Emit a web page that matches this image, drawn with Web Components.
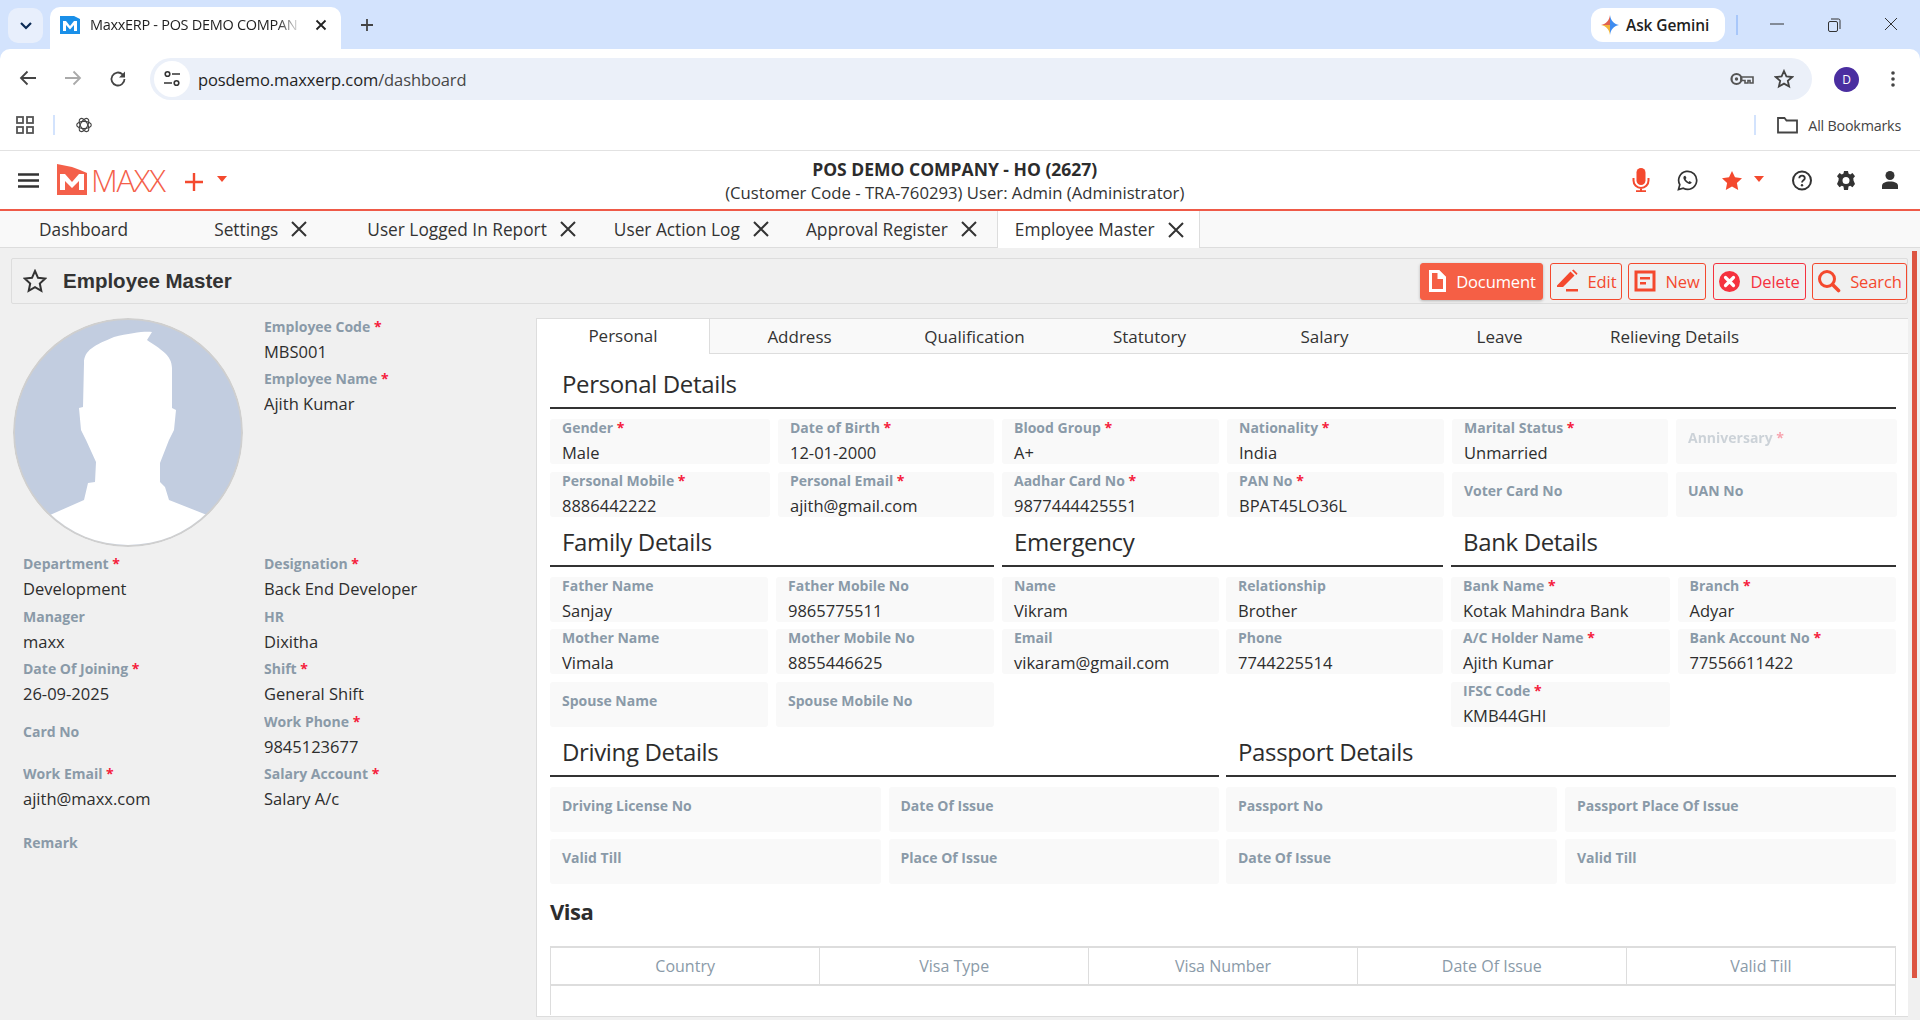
<!DOCTYPE html>
<html>
<head>
<meta charset="utf-8">
<title>MaxxERP - POS DEMO COMPANY</title>
<style>
  html, body { margin: 0; height: 100%; overflow: hidden; background: #f0f0f0; }
  body { font-family: "Open Sans", "Liberation Sans", sans-serif; color: #333; display: flex; flex-direction: column; height: 1020px; }
</style>
</head>
<body>
<browser-bar></browser-bar>
<app-header></app-header>
<page-tabs></page-tabs>
<page-title></page-title>
<main-area>
  <employee-sidebar></employee-sidebar>
  <detail-panel></detail-panel>
</main-area>

<script>
const RED = "#f4492e";

const ICONS = {
  doc: `<svg width="20" height="24" viewBox="0 0 20 24"><path fill="#fff" d="M2 1h10l7 7v15H2z"/><path fill="#f55f45" d="M5 4h5.500v6H16v10H5z"/><path fill="#fff" d="M12 1v7h7z"/></svg>`,
  edit: `<svg width="24" height="24" viewBox="0 0 24 24"><path fill="${RED}" d="M15.500 2.500l4 4L8 18H2v-1.500zM11 20h12v2.500H11z"/><path fill="${RED}" d="M17 1.500l1.500-1 4 4-1 1.500z"/></svg>`,
  form: `<svg width="22" height="22" viewBox="0 0 22 22"><rect x="2" y="2" width="18" height="18" fill="none" stroke="${RED}" stroke-width="3"/><path fill="${RED}" d="M6 7h10v2.500H6zM6 12h6v2.500H6z"/></svg>`,
  del: `<svg width="23" height="23" viewBox="0 0 23 23"><circle cx="11.500" cy="11.500" r="10.500" fill="#f5323f"/><path stroke="#fff" stroke-width="3.200" stroke-linecap="round" d="M7.500 7.500l8 8M15.500 7.500l-8 8"/></svg>`,
  search: `<svg width="24" height="24" viewBox="0 0 24 24"><circle cx="10" cy="10" r="7.500" fill="none" stroke="${RED}" stroke-width="3"/><path stroke="${RED}" stroke-width="3.600" stroke-linecap="round" d="M15.500 15.500l6 6"/></svg>`,
};

class BrowserBar extends HTMLElement {
  constructor() {
    super();
    this.attachShadow({mode: "open"}).innerHTML = `
      <style>
        :host { display: block; background: #d3e3fd; font-family: "Open Sans", sans-serif; color: #1f1f1f; flex: none; }
        svg { display: block; flex: none; }
        .strip { height: 49px; display: flex; align-items: flex-start; position: relative; }
        .tablist { width: 35px; height: 35px; margin: 8px 7px 0 8px; border-radius: 10px; background: #e8effc; display: grid; place-items: center; flex: none; }
        .tab { width: 291px; height: 42px; margin-top: 7px; background: #fff; border-radius: 10px 10px 0 0; display: flex; align-items: center; padding: 0 10px 7px; box-sizing: border-box; flex: none; }
        .tab .ttl { margin-left: 10px; width: 212px; overflow: hidden; white-space: nowrap; font-size: 14.500px; letter-spacing: -.3px; -webkit-mask-image: linear-gradient(to right, #000 88%, transparent); }
        .tab .x { margin-left: 13px; }
        .newtab { margin: 18px 0 0 19px; }
        .right { margin-left: auto; display: flex; align-items: center; height: 49px; }
        .gemini { width: 134px; height: 34px; border-radius: 12px; background: #fff; display: flex; align-items: center; gap: 7px; padding-left: 10px; box-sizing: border-box; font-size: 15.500px; font-weight: 600; letter-spacing: -.1px; }
        .vsep { width: 2px; height: 20px; background: #a8c7fa; margin-left: 11px; }
        .win { display: flex; margin: 0 22px 0 32px; gap: 43px; }
        .tools { height: 51px; box-sizing: border-box; padding: 9px 0 0 19px; background: #fff; border-radius: 10px 10px 0 0; display: flex; align-items: center; }
        .nav { display: flex; gap: 27px; margin-right: 23px; }
        .omni { width: 1662px; height: 42px; box-sizing: border-box; background: #ebf0f9; border-radius: 21px; display: flex; align-items: center; padding-left: 4px; font-size: 16.500px; letter-spacing: -.1px; }
        .site { width: 36px; height: 36px; border-radius: 50%; background: #fff; display: grid; place-items: center; margin-right: 8px; }
        .omni .gray { color: #474747; }
        .omni .end { margin-left: auto; display: flex; align-items: center; gap: 20px; padding-right: 18px; }
        .prof { width: 25px; height: 25px; border-radius: 50%; background: #4a2ea0; color: #fff; font-size: 12px; display: grid; place-items: center; margin-left: 22px; }
        .dots { margin-left: 32px; }
        .marks { height: 50px; background: #fff; border-bottom: 1px solid #e2e2e2; display: flex; align-items: center; padding-left: 16px; font-size: 14.300px; color: #444; }
        .marks .sep { width: 2px; height: 20px; background: #d3e3fd; margin: 0 21px 0 19px; }
        .marks .all { margin-left: auto; display: flex; align-items: center; gap: 10px; padding-right: 19px; letter-spacing: -.2px; }
        .marks .sep2 { width: 2px; height: 20px; background: #d3e3fd; margin-right: 11px; }
      </style>
      <div class="strip">
        <div class="tablist"><svg width="14" height="10" viewBox="0 0 14 10"><path d="M2 2l5 5 5-5" fill="none" stroke="#0b2a55" stroke-width="2.200"/></svg></div>
        <div class="tab">
          <svg width="20" height="20" viewBox="0 0 20 20"><path fill="#1a8fe8" d="M0 1l14 0 6 3v15H0z"/><path fill="#fff" d="M3 16V6h3l4 5 4-5h3v10h-3V10l-4 4.500L6 10v6z"/></svg>
          <span class="ttl">MaxxERP - POS DEMO COMPAN</span>
          <svg class="x" width="12" height="12" viewBox="0 0 12 12"><path d="M1.500 1.500l9 9M10.500 1.500l-9 9" stroke="#222" stroke-width="1.800"/></svg>
        </div>
        <svg class="newtab" width="14" height="14" viewBox="0 0 14 14"><path d="M7 1v12M1 7h12" stroke="#444" stroke-width="1.800"/></svg>
        <div class="right">
          <div class="gemini">
            <svg width="18" height="20" viewBox="0 0 18 20"><path fill="#3f8cf0" d="M9 0c.8 5.500 3.500 8.800 9 10-5.500 1.200-8.200 4.500-9 10z"/><path fill="#e0604f" d="M9 0C8.200 5.500 5.500 8.800 0 10h9z"/><path fill="#f3b63c" d="M0 10c5.500 1.200 8.200 4.500 9 10v-10z"/></svg>
            <span>Ask Gemini</span>
          </div>
          <div class="vsep"></div>
          <div class="win">
            <svg width="14" height="14" viewBox="0 0 14 14"><path d="M0 7h14" stroke="#333" stroke-width="1"/></svg>
            <svg width="14" height="16" viewBox="0 0 14 16"><rect x="1.500" y="4.500" width="9" height="10" rx="1.500" fill="none" stroke="#333"/><path d="M4 2h7.500a1.500 1.500 0 0 1 1.500 1.500V12" fill="none" stroke="#333"/></svg>
            <svg width="14" height="14" viewBox="0 0 14 14"><path d="M1 1l12 12M13 1L1 13" stroke="#333" stroke-width="1"/></svg>
          </div>
        </div>
      </div>
      <div class="tools">
        <div class="nav">
          <svg width="18" height="16" viewBox="0 0 18 16"><path d="M17 8H2M8.500 1.500L2 8l6.500 6.500" fill="none" stroke="#444" stroke-width="1.800"/></svg>
          <svg width="18" height="16" viewBox="0 0 18 16"><path d="M1 8h15M9.500 1.500L16 8l-6.500 6.500" fill="none" stroke="#aaa" stroke-width="1.800"/></svg>
          <svg width="18" height="18" viewBox="0 0 18 18"><path d="M15.500 9a6.500 6.500 0 1 1-2-4.700L15.500 6.500" fill="none" stroke="#444" stroke-width="1.800"/><path d="M16 1.500v6h-6z" fill="#444"/></svg>
        </div>
        <div class="omni">
          <div class="site"><svg width="18" height="18" viewBox="0 0 18 18"><circle cx="4.500" cy="4" r="2.300" fill="none" stroke="#333" stroke-width="1.600"/><path d="M9 4h8M1 13h8" stroke="#333" stroke-width="1.600"/><circle cx="13.500" cy="13" r="2.300" fill="none" stroke="#333" stroke-width="1.600"/></svg></div>
          <span>posdemo.maxxerp.com</span><span class="gray">/dashboard</span>
          <div class="end">
            <svg width="24" height="14" viewBox="0 0 24 14"><circle cx="6.500" cy="7" r="5" fill="none" stroke="#555" stroke-width="2.200"/><circle cx="6.500" cy="7" r="1.700" fill="#555"/><path d="M11 5h12v6h-3V8.500h-2V11h-3V8.500h-4z" fill="none" stroke="#555" stroke-width="1.600"/></svg>
            <svg width="20" height="20" viewBox="0 0 20 20"><path d="M10 2l2.400 5.400 5.800.6-4.400 3.800 1.300 5.700L10 14.600l-5.100 2.900 1.300-5.700L1.800 8l5.800-.6z" fill="none" stroke="#444" stroke-width="1.800"/></svg>
          </div>
        </div>
        <div class="prof">D</div>
        <svg class="dots" width="4" height="16" viewBox="0 0 4 16"><circle cx="2" cy="2" r="1.800" fill="#444"/><circle cx="2" cy="8" r="1.800" fill="#444"/><circle cx="2" cy="14" r="1.800" fill="#444"/></svg>
      </div>
      <div class="marks">
        <svg width="18" height="18" viewBox="0 0 18 18"><g fill="none" stroke="#555" stroke-width="1.800"><rect x="1" y="1" width="6" height="6"/><rect x="11" y="1" width="6" height="6"/><rect x="1" y="11" width="6" height="6"/><rect x="11" y="11" width="6" height="6"/></g></svg>
        <div class="sep"></div>
        <svg width="16" height="16" viewBox="0 0 16 16"><g fill="none" stroke="#444" stroke-width="1.100"><ellipse cx="8" cy="8" rx="7.300" ry="3.600"/><ellipse cx="8" cy="8" rx="7.300" ry="3.600" transform="rotate(60 8 8)"/><ellipse cx="8" cy="8" rx="7.300" ry="3.600" transform="rotate(120 8 8)"/></g></svg>
        <div class="all"><div class="sep2"></div>
          <svg width="21" height="18" viewBox="0 0 21 18"><path d="M1 2h6.500l2 2.500H20V16.500H1z" fill="none" stroke="#444" stroke-width="1.800"/></svg>
          <span>All Bookmarks</span>
        </div>
      </div>`;
  }
}

class AppHeader extends HTMLElement {
  constructor() {
    super();
    this.attachShadow({mode: "open"}).innerHTML = `
      <style>
        :host { display: flex; height: 58px; background: #fff; border-bottom: 2px solid #ef5a48; align-items: center; position: relative; flex: none; padding-left: 18px; }
        svg { display: block; flex: none; }
        .logo { margin-left: 18px; display: flex; align-items: flex-end; margin-top: -2px; }
        .maxx { color: #f4604a; font-size: 31px; font-weight: 300; line-height: 30px; margin-left: 4px; letter-spacing: -1.300px; }
        .plus { margin-left: 20px; margin-top: 4px; }
        .caret { width: 0; height: 0; border: 5px solid transparent; border-top: 6px solid ${RED}; border-bottom: 0; }
        .center { flex: 1; text-align: center; margin-left: 38px; padding-top: 2px; color: #333; }
        .center b { display: block; font-size: 17.500px; line-height: 24px; color: #2c2c2c; font-weight: 700; }
        .center span { display: block; font-size: 16.700px; line-height: 24px; }
        .icons { display: flex; align-items: center; width: 275px; padding-right: 22px; box-sizing: border-box; justify-content: flex-end; }
      </style>
      <svg width="21" height="15" viewBox="0 0 21 15"><path d="M0 1.500h21M0 7.500h21M0 13.500h21" stroke="#333" stroke-width="2.400"/></svg>
      <div class="logo">
        <svg width="30" height="31" viewBox="0 0 30 31"><path fill="#f4604a" d="M0 0l15 3 8 3 7 3v22H0z"/><path fill="#fff" d="M3 26V10h5l7 8 7-8h5v16h-5V17l-7 7-7-7v9z"/></svg>
        <span class="maxx">MAXX</span>
      </div>
      <svg class="plus" width="18" height="18" viewBox="0 0 18 18"><path d="M9 0v18M0 9h18" stroke="${RED}" stroke-width="2.400"/></svg>
      <div class="caret" style="margin-left:14px;margin-top:-2px"></div>
      <div class="center">
        <b>POS DEMO COMPANY - HO (2627)</b>
        <span>(Customer Code - TRA-760293) User: Admin (Administrator)</span>
      </div>
      <div class="icons">
        <svg width="18" height="24" viewBox="0 0 18 24" style="margin-right:27px"><rect x="4.500" y="0" width="9" height="17" rx="4.500" fill="${RED}"/><path d="M1.500 10v2.500a7.500 7.500 0 0 0 15 0V10M9 20v3M4 23.200h10" fill="none" stroke="${RED}" stroke-width="2"/></svg>
        <svg width="21" height="21" viewBox="0 0 21 21" style="margin-right:24px"><path d="M1.500 19.500l1.300-4.800A9 9 0 1 1 6.300 18.200z" fill="none" stroke="#333" stroke-width="1.700"/><path d="M7.300 6c-1 .6-1.200 2-.4 3.500 1 2 2.600 3.500 4.700 4.300 1.500.5 2.700 0 3.200-1.200l-2.200-1.500-1 .9c-1.200-.5-2.400-1.700-3-3l.9-1L8.300 5.800z" fill="#333"/></svg>
        <svg width="20" height="19" viewBox="0 0 20 19" style="margin-right:12px"><path d="M10 0l3 6.300 7 .9-5.100 4.800 1.300 7L10 15.600 3.800 19l1.300-7L0 7.200l7-.9z" fill="${RED}"/></svg>
        <div class="caret" style="margin-top:-2px;margin-right:28px"></div>
        <svg width="20" height="21" viewBox="0 0 20 21" style="margin-right:25px"><circle cx="10" cy="10.500" r="9" fill="none" stroke="#333" stroke-width="2"/><path d="M7.300 8.300c0-3.500 5.500-3.500 5.500 0 0 2-2.800 2-2.800 4.200" fill="none" stroke="#333" stroke-width="1.800"/><circle cx="10" cy="15.300" r="1.200" fill="#333"/></svg>
        <svg width="18" height="19" viewBox="0 0 18 19" style="margin-right:27px"><path fill="#333" fill-rule="evenodd" d="M7 0h4l.5 2.600 1.700.8L15.500 2 18 5.200l-1.700 2 .2 2.300L18 13l-2.500 3.300-2.300-1.500-1.700.8L11 19H7l-.5-3.400-1.700-.8-2.300 1.500L0 13l1.500-3.500.2-2.300L0 5.200 2.500 2l2.300 1.400 1.700-.8zM9 6a3.500 3.500 0 1 0 0 7 3.500 3.500 0 0 0 0-7z"/></svg>
        <svg width="16" height="18" viewBox="0 0 16 18"><circle cx="8" cy="4.500" r="4.500" fill="#333"/><path d="M0 18v-3c0-3 3-4.500 8-4.500s8 1.500 8 4.500v3z" fill="#333"/></svg>
      </div>`;
  }
}

class PageTabs extends HTMLElement {
  constructor() {
    super();
    const tabs = [
      ["Dashboard", false],
      ["Settings", true],
      ["User Logged In Report", true],
      ["User Action Log", true],
      ["Approval Register", true],
    ];
    const x = `<svg width="16" height="16" viewBox="0 0 16 16"><path d="M1 1l14 14M15 1L1 15" stroke="#333" stroke-width="2"/></svg>`;
    const gaps = [86, 60, 38, 37, 0];
    const items = tabs.map((t, i) => `<div class="t" style="margin-right:${gaps[i]}px"><span>${t[0]}</span>${t[1] ? x : ""}</div>`).join("");
    this.attachShadow({mode: "open"}).innerHTML = `
      <style>
        :host { display: flex; height: 36px; background: #f9f9f9; border-bottom: 1px solid #ddd; padding-left: 39px; align-items: stretch; flex: none; font-size: 17.300px; color: #333; }
        .t { display: flex; align-items: center; gap: 13px; white-space: nowrap; }
        svg { display: block; flex: none; }
        .active { background: #fff; border: solid #ddd; border-width: 0 1px; margin-left: 20px; padding: 0 17px; width: 203px; box-sizing: border-box; margin-bottom: -1px; }
      </style>
      ${items}
      <div class="t active"><span>Employee Master</span>${x}</div>`;
  }
}

class ActionBtn extends HTMLElement {
  constructor() {
    super();
    this.attachShadow({mode: "open"}).innerHTML = `
      <style>
        :host { display: inline-flex; align-items: center; height: 37px; box-sizing: border-box; border: 1px solid ${RED}; border-radius: 3px; color: ${RED}; font-size: 16.500px; gap: 9px; justify-content: center; letter-spacing: -.1px; }
        :host([solid]) { background: #f55f45; border-color: #f55f45; color: #fff; box-shadow: 0 1px 3px rgba(0,0,0,.25); }
        :host([danger]) { border-color: #f5323f; color: #f5323f; }
        svg { display: block; flex: none; }
      </style>
      ${ICONS[this.getAttribute("icon")]}<slot></slot>`;
  }
}

class PageTitle extends HTMLElement {
  constructor() {
    super();
    this.attachShadow({mode: "open"}).innerHTML = `
      <style>
        :host { display: flex; align-items: center; height: 46px; box-sizing: border-box; margin: 10px 12px 0 11px; border: 1px solid #ddd; border-radius: 2px; padding: 0 0 0 11px; flex: none; }
        svg { display: block; flex: none; }
        h1 { margin: 1px 0 0 16px; font: bold 20.500px/1 "Liberation Sans", Arial, sans-serif; color: #333; }
        .btns { margin-left: auto; display: flex; gap: 6.500px; }
      </style>
      <svg width="24" height="24" viewBox="0 0 24 24"><path d="M12 2l3 6.800 7.200.8-5.400 4.900 1.500 7.300L12 18.200l-6.300 3.600 1.500-7.300L1.800 9.600 9 8.800z" fill="none" stroke="#333" stroke-width="2"/></svg>
      <h1>Employee Master</h1>
      <div class="btns">
        <action-btn icon="doc" solid style="width:123px">Document</action-btn>
        <action-btn icon="edit" style="width:72px">Edit</action-btn>
        <action-btn icon="form" style="width:78px">New</action-btn>
        <action-btn icon="del" danger style="width:93px">Delete</action-btn>
        <action-btn icon="search" style="width:95px">Search</action-btn>
      </div>`;
  }
}

class MainArea extends HTMLElement {
  constructor() {
    super();
    this.attachShadow({mode: "open"}).innerHTML = `
      <style>
        :host { display: flex; flex: 1; min-height: 0; position: relative; }
        .thumb { position: absolute; right: 3px; top: -53px; width: 5px; height: 727px; background: #dd5542; }
      </style>
      <slot></slot><div class="thumb"></div>`;
  }
}

class FieldBox extends HTMLElement {
  constructor() {
    super();
    const value = this.getAttribute("value");
    const req = this.hasAttribute("req") ? ` <i>*</i>` : "";
    this.attachShadow({mode: "open"}).innerHTML = `
      <style>
        :host { display: block; height: 45px; box-sizing: border-box; background: #f9f9f9; border-radius: 3px; padding-left: 12px; overflow: hidden; white-space: nowrap; }
        :host([plain]) { background: none; padding-left: 0; }
        :host([dim]) .lbl { opacity: .4; }
        .lbl { font-size: 14px; font-weight: 700; line-height: 18px; color: #8a9aa8; }
        .lbl.low { margin-top: 10px; }
        i { color: #f5203c; font-style: normal; font-weight: 700; }
        .val { font-size: 16.500px; line-height: 22px; margin-top: 5px; color: #2d2d2d; }
      </style>
      <div class="lbl ${value ? "" : "low"}">${this.getAttribute("label")}${req}</div>
      ${value ? `<div class="val">${value}</div>` : ""}`;
  }
}

class SectionHead extends HTMLElement {
  constructor() {
    super();
    this.attachShadow({mode: "open"}).innerHTML = `
      <style>
        :host { display: flex; align-items: flex-end; box-sizing: border-box; height: var(--h, 50px); border-bottom: 2px solid #333; margin-bottom: 10px; padding: 0 0 8px 12px; font-size: 24px; line-height: 30px; color: #2d2d2d; letter-spacing: -.35px; }
      </style>
      <slot></slot>`;
  }
}

class FormGrid extends HTMLElement {
  constructor() {
    super();
    this.attachShadow({mode: "open"}).innerHTML = `
      <style>
        :host { display: grid; grid-template-columns: var(--cols, 1fr 1fr); column-gap: var(--cgap, 8px); row-gap: 7.500px; }
      </style>
      <slot></slot>`;
  }
}

class EmployeeSidebar extends HTMLElement {
  constructor() {
    super();
    this.attachShadow({mode: "open"}).innerHTML = `
      <style>
        :host { display: block; width: 536px; flex: none; box-sizing: border-box; padding: 14px 0 0 0; }
        .top { display: flex; height: 237px; padding-left: 13px; }
        .photo { display: block; flex: none; border-radius: 50%; }
        .tf { margin-left: 21px; display: flex; flex-direction: column; gap: 7px; width: 240px; }
        .rows { display: grid; grid-template-columns: 241px 240px; padding-left: 23px; row-gap: 7.500px; }
        .remark { margin-top: 6px; }
      </style>
      <div class="top">
        <svg class="photo" width="230" height="229" viewBox="13 318 230 229">
          <ellipse cx="128" cy="432.500" rx="114" ry="113.500" fill="#c2cde0" stroke="#cfcfcf" stroke-width="2"/>
          <clipPath id="c"><ellipse cx="128" cy="432.500" rx="113" ry="112.500"/></clipPath>
          <path clip-path="url(#c)" fill="#fff" d="M152 332 147 340C160 349 172 355 172 368L172 408 176 410 174 430 169 440 160 463 160 482 165 487 169 500 207 515 207 560 50 560 50 515 84 500 88 483 95 482 96 462 86 440 81 430 79 408 83 407 84 363C84 350 95 345 114 337 130 333 145 331 152 332Z"/>
        </svg>
        <div class="tf">
          <field-box plain label="Employee Code" req value="MBS001"></field-box>
          <field-box plain label="Employee Name" req value="Ajith Kumar"></field-box>
        </div>
      </div>
      <div class="rows">
        <field-box plain label="Department" req value="Development"></field-box>
        <field-box plain label="Designation" req value="Back End Developer"></field-box>
        <field-box plain label="Manager" value="maxx"></field-box>
        <field-box plain label="HR" value="Dixitha"></field-box>
        <field-box plain label="Date Of Joining" req value="26-09-2025"></field-box>
        <field-box plain label="Shift" req value="General Shift"></field-box>
        <field-box plain label="Card No"></field-box>
        <field-box plain label="Work Phone" req value="9845123677"></field-box>
        <field-box plain label="Work Email" req value="ajith@maxx.com"></field-box>
        <field-box plain label="Salary Account" req value="Salary A/c"></field-box>
        <field-box plain class="remark" label="Remark"></field-box>
      </div>`;
  }
}

class DetailTabs extends HTMLElement {
  constructor() {
    super();
    const names = ["Personal", "Address", "Qualification", "Statutory", "Salary", "Leave", "Relieving Details"];
    this.attachShadow({mode: "open"}).innerHTML = `
      <style>
        :host { display: flex; height: 36px; box-sizing: border-box; background: #f9f9f9; border-bottom: 1px solid #ddd; border-top: 1px solid #ddd; flex: none; font-size: 17px; color: #333; }
        div { width: 175px; display: grid; place-items: center; }
        .on { background: #fff; border-right: 1px solid #ddd; box-sizing: border-box; width: 173px; margin-bottom: -1px; padding-bottom: 2px; margin-right: 2px; }
      </style>
      ${names.map((n, i) => `<div class="${i ? "" : "on"}">${n}</div>`).join("")}`;
  }
}

class VisaTable extends HTMLElement {
  constructor() {
    super();
    const heads = ["Country", "Visa Type", "Visa Number", "Date Of Issue", "Valid Till"];
    this.attachShadow({mode: "open"}).innerHTML = `
      <style>
        :host { display: block; margin-top: 21px; height: 69px; box-sizing: border-box; border: solid #ddd; border-width: 0 1px; }
        table { width: 100%; border-collapse: collapse; table-layout: fixed; }
        th { height: 36px; padding: 0; border-top: 2px solid #ddd; border-bottom: 2px solid #ddd; border-left: 1px solid #ddd; font-size: 16px; font-weight: 400; color: #8a9aa8; }
        th:first-child { border-left: 0; }
      </style>
      <table><tr>${heads.map((h) => `<th>${h}</th>`).join("")}</tr></table>`;
  }
}

class DetailPanel extends HTMLElement {
  constructor() {
    super();
    this.attachShadow({mode: "open"}).innerHTML = `
      <style>
        :host { display: flex; flex-direction: column; width: 1372px; height: 699px; background: #fff; border-left: 1px solid #ddd; border-bottom: 1px solid #ddd; box-sizing: border-box; margin-top: 14px; overflow: hidden; }
        .body { padding: 0 12px 0 13px; }
        .six { --cols: 220px 216px 217px 217px 216px 221px; }
        .three { display: grid; grid-template-columns: 444px 441px 445px; column-gap: 8px; }
        .e { --cols: 217px 217px; --cgap: 7px; }
        .two { display: grid; grid-template-columns: 669px 670px; column-gap: 7px; --cgap: 8px; --cols: 1fr 1fr; }
        h3 { margin: 13px 0 0; font: bold 22px/28px "Open Sans", sans-serif; color: #2d2d2d; letter-spacing: -.5px; height: 28px; }
      </style>
      <detail-tabs></detail-tabs>
      <div class="body">
        <section-head style="--h:55px">Personal Details</section-head>
        <form-grid class="six">
          <field-box label="Gender" req value="Male"></field-box>
          <field-box label="Date of Birth" req value="12-01-2000"></field-box>
          <field-box label="Blood Group" req value="A+"></field-box>
          <field-box label="Nationality" req value="India"></field-box>
          <field-box label="Marital Status" req value="Unmarried"></field-box>
          <field-box dim label="Anniversary" req></field-box>
          <field-box label="Personal Mobile" req value="8886442222"></field-box>
          <field-box label="Personal Email" req value="ajith@gmail.com"></field-box>
          <field-box label="Aadhar Card No" req value="9877444425551"></field-box>
          <field-box label="PAN No" req value="BPAT45LO36L"></field-box>
          <field-box label="Voter Card No"></field-box>
          <field-box label="UAN No"></field-box>
        </form-grid>
        <div class="three">
          <div>
            <section-head>Family Details</section-head>
            <form-grid>
              <field-box label="Father Name" value="Sanjay"></field-box>
              <field-box label="Father Mobile No" value="9865775511"></field-box>
              <field-box label="Mother Name" value="Vimala"></field-box>
              <field-box label="Mother Mobile No" value="8855446625"></field-box>
              <field-box label="Spouse Name"></field-box>
              <field-box label="Spouse Mobile No"></field-box>
            </form-grid>
          </div>
          <div>
            <section-head>Emergency</section-head>
            <form-grid class="e">
              <field-box label="Name" value="Vikram"></field-box>
              <field-box label="Relationship" value="Brother"></field-box>
              <field-box label="Email" value="vikaram@gmail.com"></field-box>
              <field-box label="Phone" value="7744225514"></field-box>
            </form-grid>
          </div>
          <div>
            <section-head>Bank Details</section-head>
            <form-grid>
              <field-box label="Bank Name" req value="Kotak Mahindra Bank"></field-box>
              <field-box label="Branch" req value="Adyar"></field-box>
              <field-box label="A/C Holder Name" req value="Ajith Kumar"></field-box>
              <field-box label="Bank Account No" req value="77556611422"></field-box>
              <field-box label="IFSC Code" req value="KMB44GHI"></field-box>
            </form-grid>
          </div>
        </div>
        <div class="two">
          <div>
            <section-head>Driving Details</section-head>
            <form-grid>
              <field-box label="Driving License No"></field-box>
              <field-box label="Date Of Issue"></field-box>
              <field-box label="Valid Till"></field-box>
              <field-box label="Place Of Issue"></field-box>
            </form-grid>
          </div>
          <div>
            <section-head>Passport Details</section-head>
            <form-grid>
              <field-box label="Passport No"></field-box>
              <field-box label="Passport Place Of Issue"></field-box>
              <field-box label="Date Of Issue"></field-box>
              <field-box label="Valid Till"></field-box>
            </form-grid>
          </div>
        </div>
        <h3>Visa</h3>
        <visa-table></visa-table>
      </div>`;
  }
}

customElements.define("browser-bar", BrowserBar);
customElements.define("app-header", AppHeader);
customElements.define("page-tabs", PageTabs);
customElements.define("action-btn", ActionBtn);
customElements.define("page-title", PageTitle);
customElements.define("main-area", MainArea);
customElements.define("field-box", FieldBox);
customElements.define("section-head", SectionHead);
customElements.define("form-grid", FormGrid);
customElements.define("employee-sidebar", EmployeeSidebar);
customElements.define("detail-tabs", DetailTabs);
customElements.define("visa-table", VisaTable);
customElements.define("detail-panel", DetailPanel);
</script>
</body>
</html>
